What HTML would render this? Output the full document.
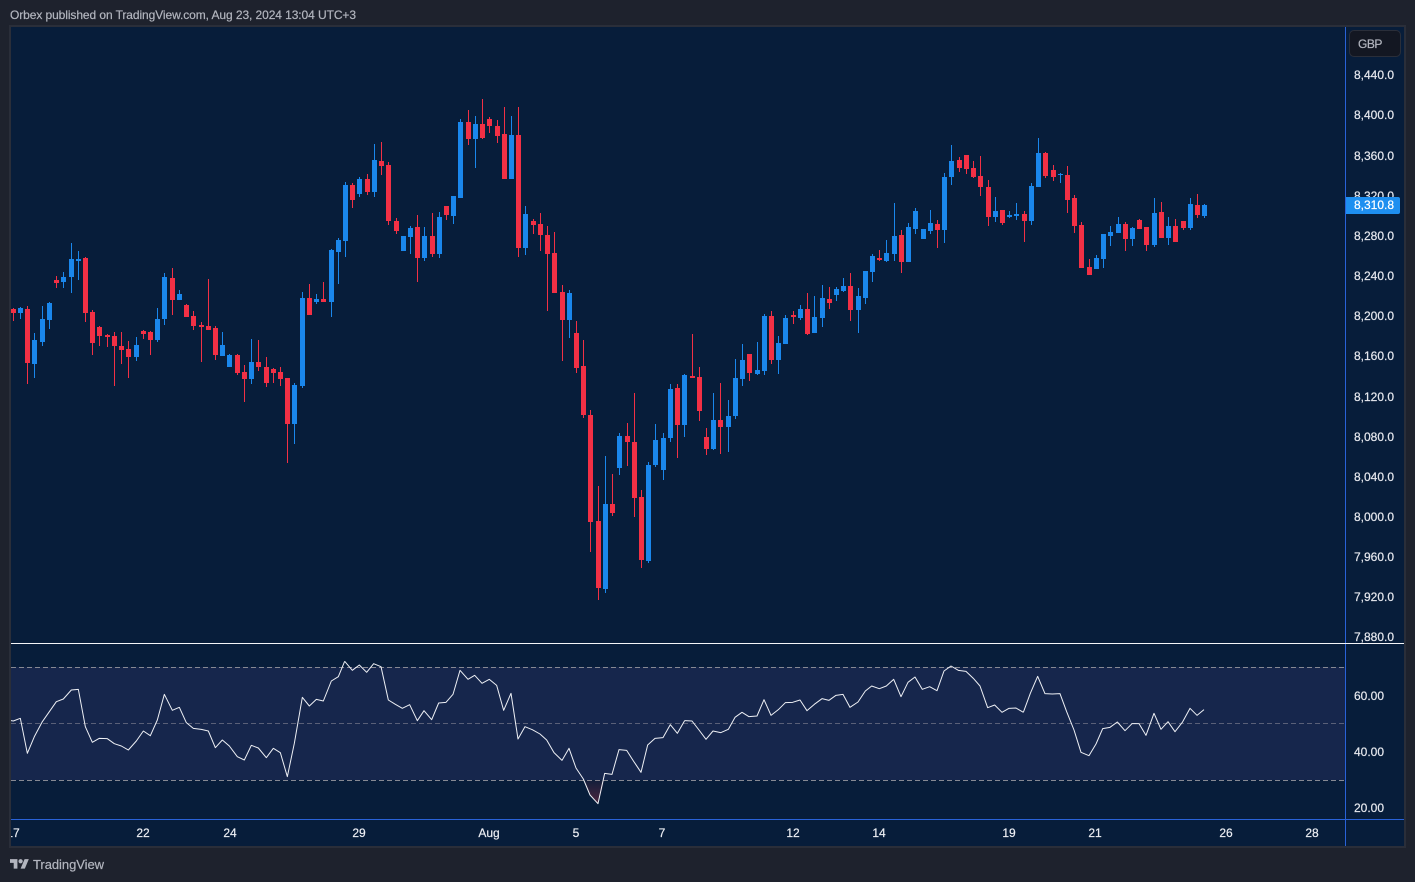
<!DOCTYPE html>
<html lang="en">
<head>
<meta charset="utf-8">
<title>Orbex chart</title>
<style>
html,body{margin:0;padding:0;width:1415px;height:882px;overflow:hidden;background:#1e222d;font-family:"Liberation Sans",sans-serif}
#stage{position:relative;width:1415px;height:882px;overflow:hidden}
.abs{position:absolute}
.t{position:absolute;font-size:12px;line-height:14px;color:#e6e8ee;white-space:nowrap;-webkit-text-stroke:.2px currentColor}
.p{left:1354px;width:42px}
.d{top:826px;width:40px;text-align:center;color:#eceef3}
svg{position:absolute;left:0;top:0}
</style>
</head>
<body>
<div id="stage">
<div class="t" style="left:10px;top:8px;color:#b2b5be;font-size:12px;letter-spacing:-.085px">Orbex published on TradingView.com, Aug 23, 2024 13:04 UTC+3</div>

<svg width="1415" height="882" viewBox="0 0 1415 882">
<defs>
<clipPath id="c"><rect x="11" y="27" width="1393" height="819"/></clipPath>
<linearGradient id="os" x1="0" y1="0" x2="0" y2="1"><stop offset="0" stop-color="#f23645" stop-opacity=".05"/><stop offset="1" stop-color="#f23645" stop-opacity=".3"/></linearGradient>
</defs>
<!-- frame -->
<rect x="9" y="25" width="1397" height="823" fill="#2a2e39"/>
<rect x="11" y="27" width="1393" height="819" fill="#071d3a"/>
<g clip-path="url(#c)">
<!-- RSI band -->
<rect x="11" y="667" width="1334" height="113" fill="#16264c"/>
<g fill="none" shape-rendering="crispEdges" stroke-width="1">
<path d="M11 667.5H1345M11 780.5H1345" stroke="#868993" stroke-dasharray="5 3"/>
<path d="M11 723.5H1345" stroke="#5a6078" stroke-dasharray="5 3"/>
</g>

<g shape-rendering="crispEdges" fill="none">
<!-- zone 1 -->
<g transform="translate(0 230) scale(.33333333)">
<path stroke="#1a87ec" stroke-width="3" d="M61 231V267M103 309V444M127 228V348M148 216V297M190 126V174M214 39V189M235 63V150M409 321V393M472 234V336M493 129V285M538 180V210M667 306V378M688 372V411M754 327V462M883 459V642M907 186V474M949 192V222M994 57V261M1015 24V162"/>
<path stroke="#1a87ec" stroke-width="15" d="M61 234V249M103 330V402M127 267V336M148 219V270M190 141V156M214 87V141M235 87V93M409 345V381M472 267V330M493 141V267M538 192V210M667 345V378M688 375V411M754 396V447M883 465V582M907 204V468M949 207V216M994 60V216M1015 30V66"/>
<path stroke="#f23045" stroke-width="3" d="M40 234V273M82 228V462M169 138V174M256 81V276M277 240V375M298 288V348M322 312V351M343 306V468M364 306V402M385 333V444M430 300V327M451 303V375M517 114V255M559 222V261M580 243V300M604 276V396M625 147V300M646 288V390M712 372V435M733 405V516M775 330V423M799 381V471M820 414V459M841 411V468M862 444V699M928 162V255M970 156V216"/>
<path stroke="#f23045" stroke-width="15" d="M40 237V249M82 237V399M169 150V159M256 84V249M277 246V339M298 291V318M322 315V321M343 318V348M364 348V360M385 357V381M430 303V312M451 306V330M517 144V210M559 225V261M580 258V288M604 285V291M625 288V300M646 294V375M712 375V429M733 426V447M775 396V411M799 411V459M820 417V429M841 426V447M862 444V582M928 204V255M970 207V216"/>
</g>
<!-- zone 2 -->
<g transform="translate(300 90) scale(.33333333)">
<path stroke="#1a87ec" stroke-width="3" d="M136 276V501M178 261V321M223 162V321M331 408V492M373 411V513M418 366V504M460 318V402M481 87V324M526 78V234M634 78V267M676 348V495"/>
<path stroke="#1a87ec" stroke-width="15" d="M136 285V453M178 267V312M223 210V306M310 438V483M331 414V441M373 438V504M418 381V492M460 318V378M481 96V324M526 102V147M634 135V267M676 372V474"/>
<path stroke="#f23045" stroke-width="3" d="M157 279V354M202 252V315M244 156V255M265 216V405M289 384V432M352 375V576M397 369V501M439 348V390M505 60V165M547 27V147M568 81V129M592 90V159M613 51V267M655 51V501M700 387V432M721 369V483M742 408V663M763 426V609"/>
<path stroke="#f23045" stroke-width="15" d="M157 285V330M202 267V306M244 213V228M265 225V393M289 393V423M352 411V504M397 438V492M439 348V375M505 96V147M547 102V144M568 87V108M592 108V138M613 132V267M655 135V474M700 393V405M721 402V435M742 435V492M763 489V609"/>
</g>
<!-- zone 3 -->
<g transform="translate(540 280) scale(.33333333)">
<path stroke="#1a87ec" stroke-width="3" d="M88 30V174M196 528V939M238 459V585M325 546V849M346 432V561M370 459V600M391 312V486M433 282V471M520 339V510M565 360V516M586 237V417M607 192V318M652 186V285M673 102V285M715 168V282"/>
<path stroke="#1a87ec" stroke-width="15" d="M88 39V120M196 672V927M238 468V564M325 555V843M346 480V555M370 474V570M391 327V474M433 285V435M520 420V507M565 408V441M586 294V408M607 240V297M652 270V282M673 108V273M715 189V240"/>
<path stroke="#f23045" stroke-width="3" d="M67 15V243M109 123V279M130 180V414M151 390V816M175 618V960M217 582V708M262 429V558M283 339V711M304 630V864M412 312V534M457 162V294M478 261V423M499 444V525M541 309V522M628 222V303M694 93V252"/>
<path stroke="#f23045" stroke-width="15" d="M67 36V120M109 159V264M130 258V405M151 405V726M175 723V924M217 672V699M262 468V486M283 486V654M304 651V840M412 324V435M457 288V294M478 291V393M499 471V507M541 420V441M628 222V279M694 108V240"/>
</g>
<!-- zone 4 -->
<g transform="translate(760 200) scale(.33333333)">
<path stroke="#1a87ec" stroke-width="3" d="M76 345V432M121 315V360M163 288V399M187 255V381M229 261V303M250 234V276M295 264V399M316 213V312M337 162V246M379 120V186M403 9V183M445 69V186M466 24V102"/>
<path stroke="#1a87ec" stroke-width="15" d="M76 354V432M121 327V354M163 351V399M187 294V354M229 267V285M250 258V273M295 288V330M316 213V294M337 168V216M379 159V183M403 108V162M445 81V186M466 33V87M490 87V117"/>
<path stroke="#f23045" stroke-width="3" d="M100 333V372M142 279V405M208 261V327M271 219V363M358 150V183M424 90V219"/>
<path stroke="#f23045" stroke-width="15" d="M100 345V351M142 327V402M208 297V309M271 258V330M358 174V180M424 105V186"/>
</g>
<!-- zone 5 -->
<g transform="translate(930 130) scale(.33333333)">
<path stroke="#1a87ec" stroke-width="3" d="M1 240V312M43 129V339M64 45V165M196 201V276M238 243V264M259 219V270M304 159V285M325 24V171M391 129V159M499 375V417M520 312V414M541 288V348M565 261V309M607 291V348M673 204V351M715 261V345M781 204V300M823 222V264"/>
<path stroke="#1a87ec" stroke-width="15" d="M1 279V303M43 141V300M64 93V141M196 243V261M238 255V261M259 252V258M304 168V273M325 69V171M391 132V135M499 384V417M520 312V387M541 306V318M565 282V309M607 294V327M673 249V345M715 288V324M781 222V294M823 225V258"/>
<path stroke="#f23045" stroke-width="3" d="M22 270V354M88 81V126M109 75V132M130 93V144M151 78V198M175 150V288M217 240V285M283 243V336M346 66V144M370 105V153M412 108V249M433 195V309M454 276V414M478 387V435M586 276V363M628 267V297M649 291V363M694 216V324M736 267V336M760 273V300M802 192V264"/>
<path stroke="#f23045" stroke-width="15" d="M22 282V300M88 90V114M109 75V117M130 114V141M151 138V171M175 171V261M217 240V279M283 252V273M346 69V138M370 120V141M412 135V210M433 204V288M454 285V414M478 411V435M586 282V327M628 270V297M649 291V345M694 246V324M736 288V336M760 273V294M802 225V255"/>
</g>
</g>

<!-- RSI oversold fill -->
<polygon points="584.5,780.5 590,795 598,803.7 604.5,780.5" fill="url(#os)"/>

<!-- RSI line -->
<g fill="none" stroke="#eef0f5" stroke-width="3" stroke-linejoin="round">
<polyline transform="translate(0 640) scale(.33333333)" points="33,242 40,243 61,235 82,340 103,290 127,245 148,215 169,185 190,177 214,150 235,148 256,260 277,307 298,295 322,296 343,311 364,318 385,330 409,303 430,273 451,287 472,240 493,163 517,211 538,202 559,248 580,265 604,268 625,273 646,323 667,300 688,318 712,350 733,360 754,316 775,324 799,353 820,325 841,338 862,410 883,310 907,172 928,198 949,178 970,183 994,123 1015,110 1034,64"/>
<polyline transform="translate(340 640) scale(.33333333)" points="14,64 37,91 58,75 80,97 101,71 123,80 145,180 166,193 187,205 209,194 232,242 252,212 275,239 296,189 318,187 339,163 360,91 384,118 404,106 426,130 448,118 470,136 491,211 513,160 534,297 555,260 577,269 600,282 620,300 642,338 666,361 687,325 708,384 730,417 750,465 774,491 794,400 816,403 837,329 860,331 881,364 903,397 923,315 945,295 969,293 991,254 1012,280 1034,242"/>
<polyline transform="translate(680 640) scale(.33333333)" points="14,242 36,243 57,270 78,298 99,273 122,278 145,268 165,232 186,217 207,230 231,228 252,179 273,226 295,209 316,188 338,187 360,180 381,212 403,193 426,176 447,181 468,166 489,163 510,202 534,186 556,153 575,138 598,146 619,138 641,118 663,170 684,127 705,111 727,148 749,140 771,152 792,93 813,78 835,91 858,94 880,115 900,138 923,203 944,195 966,217 987,205 1008,204 1030,217"/>
<polyline transform="translate(1020 640) scale(.33333333)" points="10,217 31,160 53,109 75,161 97,162 120,161 140,215 162,270 183,337 207,347 228,312 248,266 270,262 292,246 315,272 336,251 357,251 378,286 402,220 423,268 444,245 465,275 487,247 510,205 531,226 552,209"/>
</g>

<!-- axes -->
<g shape-rendering="crispEdges">
<rect x="1345" y="27" width="1" height="819" fill="#2962d8"/>
<rect x="11" y="819" width="1393" height="1" fill="#2962d8"/>
<rect x="11" y="643" width="1394" height="1" fill="#f4f5f8"/>
</g>
</g>

<!-- TV logo -->
<g transform="translate(10 857) scale(.53)" fill="#b2b5be">
<path d="M14 22H7V11H0V4h14v18zM28 22h-8l7.5-18h8L28 22z"/>
<circle cx="20" cy="8" r="4"/>
</g>
</svg>

<!-- price axis -->
<div class="t p" style="top:68px">8,440.0</div>
<div class="t p" style="top:108px">8,400.0</div>
<div class="t p" style="top:149px">8,360.0</div>
<div class="t p" style="top:189px">8,320.0</div>
<div class="t p" style="top:229px">8,280.0</div>
<div class="t p" style="top:269px">8,240.0</div>
<div class="t p" style="top:309px">8,200.0</div>
<div class="t p" style="top:349px">8,160.0</div>
<div class="t p" style="top:390px">8,120.0</div>
<div class="t p" style="top:430px">8,080.0</div>
<div class="t p" style="top:470px">8,040.0</div>
<div class="t p" style="top:510px">8,000.0</div>
<div class="t p" style="top:550px">7,960.0</div>
<div class="t p" style="top:590px">7,920.0</div>
<div class="t p" style="top:630px;height:13px;overflow:hidden">7,880.0</div>
<div class="t p" style="top:689px">60.00</div>
<div class="t p" style="top:745px">40.00</div>
<div class="t p" style="top:801px">20.00</div>

<div class="abs" style="left:1346px;top:197px;width:54px;height:17px;background:#1e8ff0;border-radius:0 2px 2px 0"></div>
<div class="t p" style="top:198px;color:#fff">8,310.8</div>

<div class="abs" style="left:1349px;top:30px;width:50px;height:25px;background:#131722;border:1px solid #2a2e39;border-radius:5px"></div>
<div class="t" style="left:1358px;top:37px;font-size:12px;letter-spacing:-.5px;color:#b2b5be">GBP</div>

<!-- time axis -->
<div class="abs" style="left:11px;top:820px;width:30px;height:26px;overflow:hidden">
<div class="t d" style="left:-18px;top:6px">17</div>
</div>
<div class="t d" style="left:123px">22</div>
<div class="t d" style="left:210px">24</div>
<div class="t d" style="left:339px">29</div>
<div class="t d" style="left:469px">Aug</div>
<div class="t d" style="left:556px">5</div>
<div class="t d" style="left:642px">7</div>
<div class="t d" style="left:773px">12</div>
<div class="t d" style="left:859px">14</div>
<div class="t d" style="left:989px">19</div>
<div class="t d" style="left:1075px">21</div>
<div class="t d" style="left:1206px">26</div>
<div class="t d" style="left:1292px">28</div>

<div class="t" style="left:33px;top:857px;font-size:13px;line-height:15px;letter-spacing:-.05px;color:#b2b5be">TradingView</div>
</div>
</body>
</html>
